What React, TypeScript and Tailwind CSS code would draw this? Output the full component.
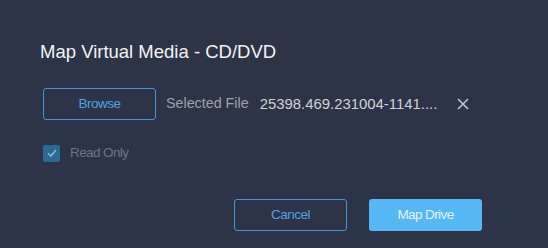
import React from "react";

export default function App() {
  return (
    <div
      className="w-[548px] h-[248px] bg-[#2d3447] relative overflow-hidden"
      style={{ fontFamily: '"Liberation Sans", Arial, sans-serif' }}
    >
      <div className="pt-[40px] pl-[40px]">
        <h1 className="text-[18.5px] leading-[24px] text-[#f2f3f5]">Map Virtual Media - CD/DVD</h1>
      </div>
      <div className="mt-[24px] pl-[43px] flex items-center h-[32px]">
        <button className="w-[113px] h-[32px] rounded-[3px] border border-[#3d98d6] text-[#4ba5e2] text-[13.5px] tracking-[-0.5px]">
          Browse
        </button>
        <span className="ml-[10px] text-[14.3px] text-[#9da2ad]">Selected File</span>
        <span className="ml-[11px] text-[14.9px] text-[#cfd3da]">25398.469.231004-1141....</span>
        <svg className="ml-[20px]" width="12" height="12" viewBox="0 0 12 12">
          <path d="M1 1L11 11M11 1L1 11" stroke="#c5c9d1" strokeWidth="1.5" />
        </svg>
      </div>
      <div className="mt-[23px] pl-[43px] flex items-center">
        <div className="w-[17px] h-[17px] rounded-[2px] bg-[#2b6a94] flex items-center justify-center">
          <svg width="12" height="12" viewBox="0 0 12 12">
            <path d="M2 6.2L4.8 9L10 3" stroke="#86b6d6" strokeWidth="1.6" fill="none" />
          </svg>
        </div>
        <span className="ml-[10px] text-[13.5px] tracking-[-0.6px] text-[#6c7384]">Read Only</span>
      </div>
      <div className="absolute left-[234px] top-[199px] flex gap-[22px]">
        <button className="w-[113px] h-[32px] rounded-[3px] border border-[#3d98d6] text-[#4ba5e2] text-[13.5px] tracking-[-0.5px]">
          Cancel
        </button>
        <button className="w-[113px] h-[32px] rounded-[3px] bg-[#55b7f3] text-[#e4f3fc] text-[13.5px] tracking-[-0.6px]">
          Map Drive
        </button>
      </div>
    </div>
  );
}
